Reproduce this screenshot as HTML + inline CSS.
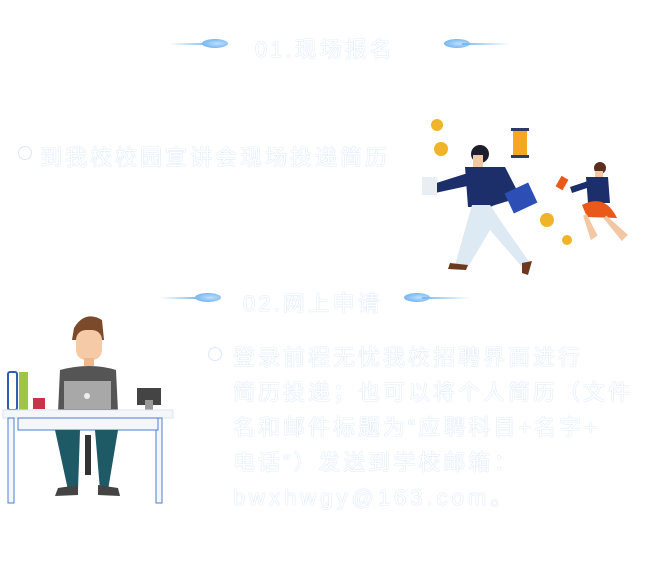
<!DOCTYPE html>
<html><head><meta charset="utf-8"><style>
body{margin:0;width:651px;height:568px;background:#fff;position:relative;overflow:hidden;font-family:"Liberation Sans","Noto Sans CJK SC",sans-serif}
.t{position:absolute;color:#fff;font-size:22px;letter-spacing:3px;white-space:nowrap;text-shadow:0 0 1px #b9d3f0,0 0 1px #d0e2f6}
.c{position:absolute;width:12px;height:12px;border:1px solid #dbe8f7;border-radius:50%}
.ln{position:absolute;height:2px;background:linear-gradient(90deg,rgba(120,180,240,0),#7ab8f0)}
.dr{position:absolute;width:26px;height:9px;border-radius:50%;background:radial-gradient(ellipse at 60% 50%,#bfe0ff,#5aa5ea)}
</style></head><body>
<div class="ln" style="left:170px;top:43px;width:40px"></div><div class="dr" style="left:202px;top:39px"></div>
<div class="t" style="left:255px;top:32px">01.现场报名</div>
<div class="dr" style="left:444px;top:39px"></div><div class="ln" style="left:462px;top:43px;width:48px;transform:scaleX(-1)"></div>

<div class="c" style="left:18px;top:146px"></div>
<div class="t" style="left:40px;top:140px">到我校校园宣讲会现场投递简历</div>

<div class="ln" style="left:160px;top:297px;width:40px"></div><div class="dr" style="left:195px;top:293px"></div>
<div class="t" style="left:243px;top:286px">02.网上申请</div>
<div class="dr" style="left:404px;top:293px"></div><div class="ln" style="left:422px;top:297px;width:48px;transform:scaleX(-1)"></div>

<div class="c" style="left:208px;top:347px"></div>
<div class="t" style="left:233px;top:340px;line-height:35px">登录前程无忧我校招聘界面进行<br>简历投递；也可以将个人简历（文件<br>名和邮件标题为“应聘科目+名字+<br>电话”）发送到学校邮箱：<br><span style="letter-spacing:4px">bwxhwgy@163.com。</span></div>

<svg style="position:absolute;left:410px;top:115px" width="240" height="165">
<circle cx="27" cy="10" r="6" fill="#f0b429"/><circle cx="31" cy="34" r="7" fill="#f0b429"/>
<rect x="103" y="14" width="14" height="28" fill="#f5a623"/><rect x="101" y="13" width="18" height="3" fill="#2b3a67"/><rect x="101" y="40" width="18" height="3" fill="#2b3a67"/>
<circle cx="70" cy="39" r="9" fill="#1d1d2b"/><rect x="63" y="40" width="10" height="12" fill="#f3c7a4"/>
<path d="M55 52 L95 52 L112 85 L118 80 L85 90 L80 92 L58 92 Z" fill="#1c2f6b"/>
<path d="M20 70 L58 58 L62 70 L25 78 Z" fill="#1c2f6b"/>
<rect x="12" y="62" width="15" height="18" fill="#e9eef2"/>
<rect x="98" y="72" width="26" height="22" fill="#2d4fb5" transform="rotate(-25 111 83)"/>
<path d="M62 90 L80 90 L92 108 L120 148 L112 152 L80 115 L58 152 L45 150 Z" fill="#dde9f3"/>
<path d="M40 148 L58 150 L56 155 L38 154 Z" fill="#6b3a1e"/><path d="M112 148 L122 146 L118 160 L112 158 Z" fill="#6b3a1e"/>
<circle cx="137" cy="105" r="7" fill="#f0b429"/><circle cx="157" cy="125" r="5" fill="#f0b429"/>
<circle cx="190" cy="53" r="6" fill="#5b2e1e"/><rect x="185" y="56" width="8" height="10" fill="#f3c7a4"/>
<path d="M176 62 L198 62 L200 88 L178 88 Z" fill="#1c2f6b"/><path d="M160 72 L178 66 L180 72 L162 78 Z" fill="#1c2f6b"/>
<rect x="148" y="62" width="8" height="12" fill="#e8591a" transform="rotate(30 152 68)"/>
<path d="M172 90 Q195 78 207 103 L177 102 Z" fill="#e8591a"/>
<path d="M175 100 L185 120 L182 122 Z M195 102 L215 120 L212 123 Z" stroke="#f3c7a4" stroke-width="4"/>
</svg>

<svg style="position:absolute;left:0;top:310px" width="180" height="200">
<path d="M74 18 Q85 0 102 10 L104 30 L72 30 Z" fill="#7a4a2a"/>
<rect x="76" y="20" width="26" height="30" rx="10" fill="#f5cba7"/>
<rect x="84" y="48" width="10" height="8" fill="#eab98f"/>
<path d="M60 60 Q90 52 116 60 L118 102 L58 102 Z" fill="#555"/>
<rect x="64" y="71" width="47" height="28" fill="#a8a8a8"/><circle cx="87" cy="86" r="3" fill="#eee"/>
<rect x="8" y="62" width="9" height="38" rx="2" fill="#fff" stroke="#2c5fb3" stroke-width="2"/>
<rect x="19" y="62" width="9" height="38" fill="#9ec54a"/>
<rect x="33" y="88" width="12" height="11" fill="#c9334a"/>
<rect x="137" y="78" width="24" height="17" fill="#444"/><rect x="145" y="90" width="8" height="10" fill="#999"/>
<rect x="3" y="100" width="170" height="8" fill="#f4f6fa" stroke="#dde5f0"/>
<rect x="8" y="108" width="6" height="85" fill="#f4f6fa" stroke="#4a7fd1"/><rect x="156" y="108" width="6" height="85" fill="#f4f6fa" stroke="#4a7fd1"/>
<rect x="18" y="108" width="140" height="12" fill="#f4f6fa" stroke="#4a7fd1"/>
<path d="M55 120 L80 120 L78 180 L68 180 Z M95 120 L118 120 L108 180 L100 180 Z" fill="#1d5a66"/>
<rect x="85" y="125" width="6" height="40" fill="#333"/>
<path d="M58 178 L78 175 L78 185 L55 186 Z M98 175 L118 178 L120 186 L98 185 Z" fill="#444"/>
</svg>
</body></html>
